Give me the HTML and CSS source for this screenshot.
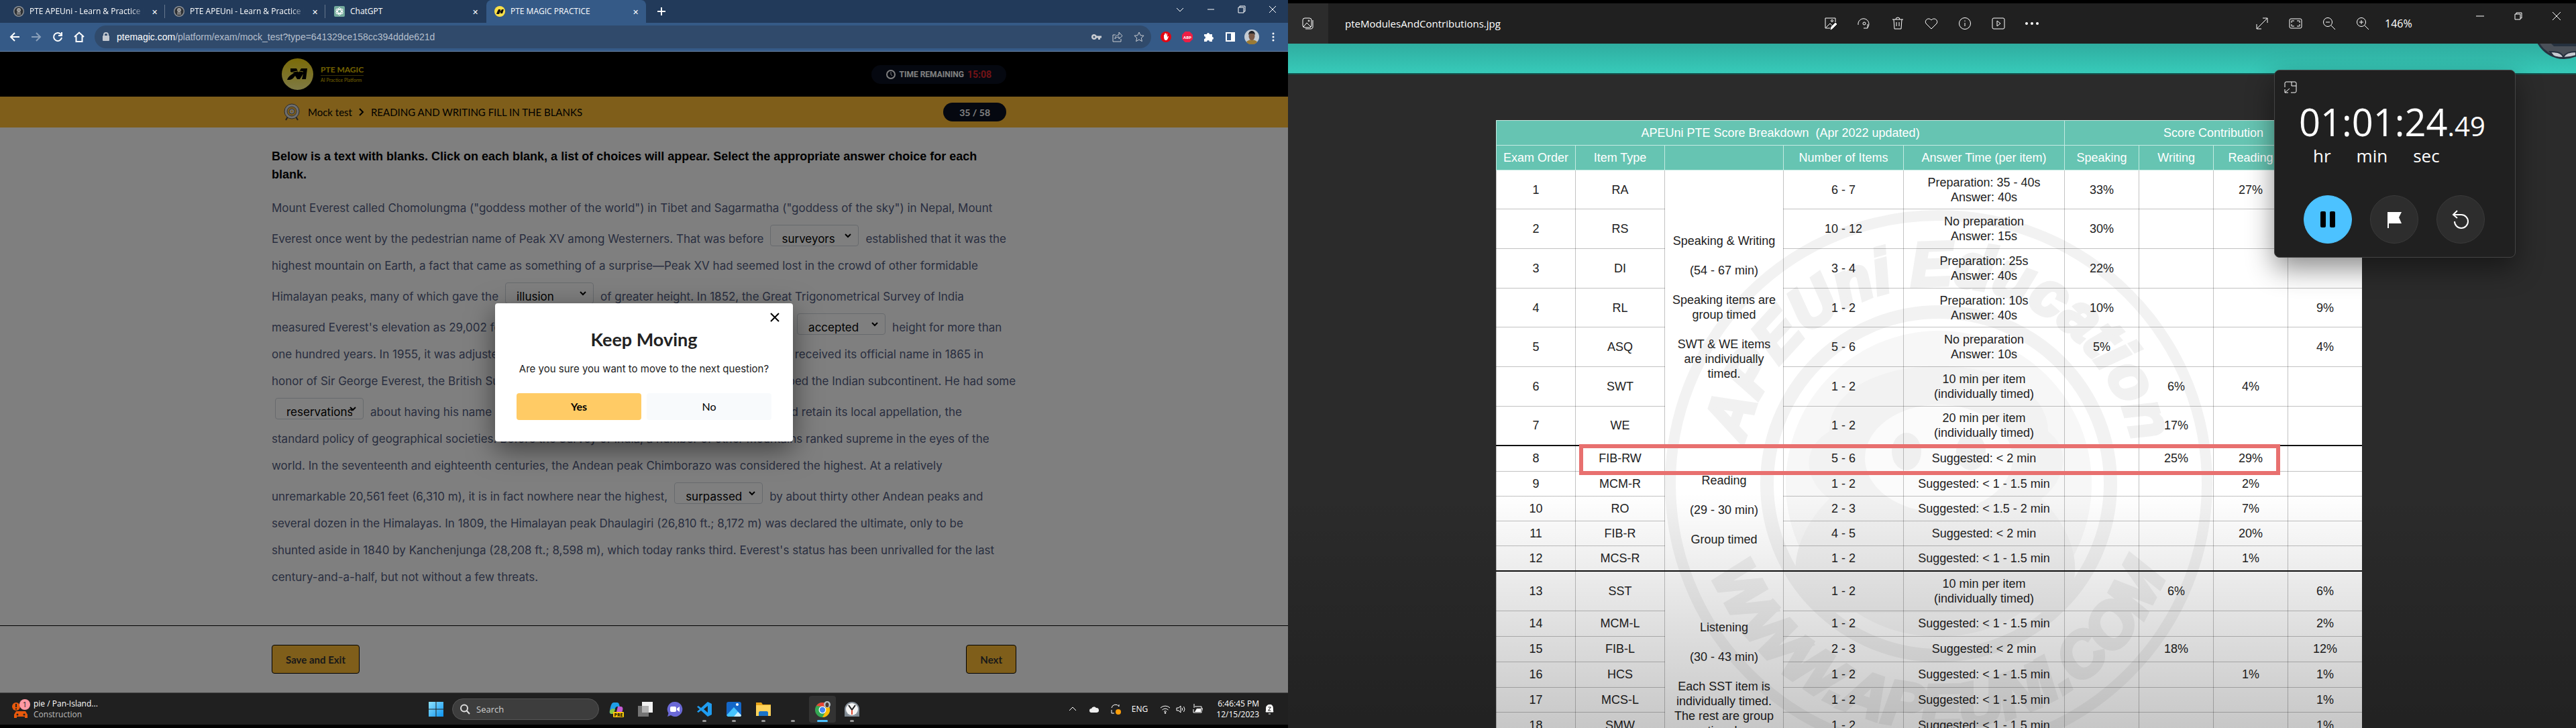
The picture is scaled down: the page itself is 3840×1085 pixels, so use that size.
FILE: index.html
```html
<!DOCTYPE html>
<html lang="en">
<head>
<meta charset="utf-8">
<title>PTE MAGIC PRACTICE</title>
<link rel="stylesheet" href="styles.css">
</head>
<body>
<div class="desktop">
  <div class="screen">
    <div class="browser">
      <div class="tabs">
        <div class="tab">
          <svg class="fav" viewBox="0 0 16 16"><circle cx="8" cy="8" r="8" fill="#8b8f93"/><circle cx="8" cy="8" r="6.5" fill="#2c2f33"/><circle cx="8" cy="6" r="3" fill="#a9a9a9"/><path d="M5 9h6v4H5z" fill="#777"/><path d="M6.500 6h1M8.500 6h1" stroke="#222"/></svg>
          <span class="tab-title">PTE APEUni - Learn &amp; Practice PTE</span><button class="x" aria-label="Close tab">✕</button>
        </div>
        <div class="tab">
          <svg class="fav" viewBox="0 0 16 16"><circle cx="8" cy="8" r="8" fill="#8b8f93"/><circle cx="8" cy="8" r="6.500" fill="#2c2f33"/><circle cx="8" cy="6" r="3" fill="#a9a9a9"/><path d="M5 9h6v4H5z" fill="#777"/><path d="M6.500 6h1M8.500 6h1" stroke="#222"/></svg>
          <span class="tab-title">PTE APEUni - Learn &amp; Practice PTE</span><button class="x" aria-label="Close tab">✕</button>
        </div>
        <div class="tab">
          <svg class="fav" viewBox="0 0 16 16"><rect width="16" height="16" rx="2" fill="#74aa9c"/><g fill="none" stroke="#fff"><ellipse cx="8" cy="8" rx="2.600" ry="5.500"/><ellipse cx="8" cy="8" rx="2.600" ry="5.500" transform="rotate(60 8 8)"/><ellipse cx="8" cy="8" rx="2.600" ry="5.500" transform="rotate(120 8 8)"/></g></svg>
          <span class="tab-title">ChatGPT</span><button class="x" aria-label="Close tab">✕</button>
        </div>
        <div class="tab active">
          <svg class="fav" viewBox="0 0 16 16"><circle cx="8" cy="8" r="8" fill="#fde047"/><path d="M3 12l1-3 2-4h3l0 3 2-3h3l-2 6h-3l0-3-2 4H5z" fill="#111"/></svg>
          <span class="tab-title">PTE MAGIC PRACTICE</span><button class="x" aria-label="Close tab">✕</button>
        </div>
        <button class="plus" aria-label="New tab"><svg width="14" height="14" viewBox="0 0 14 14"><path d="M7 1v12M1 7h12" stroke="#fff" stroke-width="2"/></svg></button>
        <div class="wincontrols">
          <svg viewBox="0 0 12 12"><path d="M1 4l5 5 5-5"/></svg>
          <svg viewBox="0 0 12 12"><path d="M1 6h10"/></svg>
          <svg viewBox="0 0 12 12"><path d="M1 3h8v8H1zM3 3V1h8v8H9"/></svg>
          <svg viewBox="0 0 12 12"><path d="M1 1l10 10M11 1L1 11"/></svg>
        </div>
      </div>
      <div class="toolbar">
        <div class="nav">
          <svg viewBox="0 0 16 16"><path d="M15 8H2M8 2L2 8l6 6"/></svg>
          <svg viewBox="0 0 16 16" class="dim"><path d="M1 8h13M8 2l6 6-6 6"/></svg>
          <svg viewBox="0 0 16 16"><path d="M13 4.500A6 6 0 1 0 14 9M14 1v5H9"/></svg>
          <svg viewBox="0 0 16 16"><path d="M1 8l7-6.500L15 8M3.500 7v8h9V7"/></svg>
        </div>
        <div class="omnibox">
          <svg width="12" height="14" viewBox="0 0 12 14"><rect x="1" y="5" width="10" height="8" rx="1" fill="#c3c8cf"/><path d="M3 6V4a3 3 0 0 1 6 0v2" fill="none" stroke="#c3c8cf" stroke-width="2"/></svg>
          <div class="url"><b>ptemagic.com</b>/platform/exam/mock_test?type=641329ce158cc394ddde621d</div>
          <div class="omni-icons">
            <svg viewBox="0 0 16 16"><path d="M1 8a4 4 0 0 1 7.700-1.500H16v3h-2V12h-3V9.500H8.700A4 4 0 0 1 1 8z" fill="#c9ccd1"/><circle cx="5" cy="8" r="1.500" fill="#304a6b"/></svg>
            <svg viewBox="0 0 16 16" class="line-icon"><path d="M5 5H1v10h12v-4M4 11c0-4 3-6 6-6V1l5 5.500L10 11V8c-3 0-5 1-6 3z"/></svg>
            <svg viewBox="0 0 16 16" class="line-icon"><path d="M8 1l2.100 4.700 5 .5-3.800 3.400 1.100 5L8 12l-4.400 2.600 1.100-5L.9 6.200l5-.5z"/></svg>
          </div>
        </div>
        <div class="exts">
          <svg viewBox="0 0 16 16"><circle cx="8" cy="8" r="8" fill="#e30613"/><path d="M5 8V5h1V3h1v4V2.500h1V7l1-4h1v6l1-2h1c-1 4-2 6-4 6S5 11 5 8z" fill="#fff"/></svg>
          <svg viewBox="0 0 16 16"><path d="M4.700 0h6.600L16 4.700v6.600L11.300 16H4.700L0 11.300V4.700z" fill="#ed1e45"/><text x="8" y="10.500" text-anchor="middle" class="abp">ABP</text></svg>
          <svg viewBox="0 0 16 16"><path d="M1 4h4a2 2 0 1 1 4 0h4v4a2 2 0 1 1 0 4v3H9a2 2 0 1 0-4 0H1v-4a2 2 0 1 0 0-4z" fill="#fff"/></svg>
          <svg viewBox="0 0 16 16"><path d="M2 2h12v12H2z" fill="none" stroke="#fff" stroke-width="2"/><path d="M9 2h5v12H9z" fill="#fff"/></svg>
          <svg class="avatar" viewBox="0 0 22 22"><circle cx="11" cy="11" r="11" fill="#c4ccd4"/><path d="M3 19c2-5 14-5 16 0a11 11 0 0 1-16 0z" fill="#9a7a35"/><ellipse cx="11" cy="10" rx="4.500" ry="6" fill="#7a5947"/><path d="M6 8c0-8 10-8 10 0l-2-2H8z" fill="#23242a"/></svg>
          <svg viewBox="0 0 16 16"><g fill="#fff"><circle cx="8" cy="3" r="1.500"/><circle cx="8" cy="8" r="1.500"/><circle cx="8" cy="13" r="1.500"/></g></svg>
        </div>
      </div>
      <main class="page">
        <header class="brandbar"><div class="wrap">
          <div class="brand">
            <svg width="47" height="47" viewBox="0 0 47 47"><defs><linearGradient id="lg" x2="0" y2="1"><stop offset="0" stop-color="#f5d510"/><stop offset="1" stop-color="#fdf58a"/></linearGradient></defs><circle cx="23.500" cy="23.500" r="23.500" fill="url(#lg)"/><path d="M13 15h9l3 6 4-6h9l-2 16h-6l2-8-5 8h-4l-3-5c-2 2-3 5-8 6H8c2-6 7-8 10-10l-5-2z" fill="#000"/><path d="M10 24c8-5 14-6 22-4" stroke="#f7e340" fill="none"/></svg>
            <div class="brand-text"><span class="bt1">PTE MAGIC</span><span class="bt2">AI Practice Platform</span></div>
          </div>
          <div class="pill timer"><svg width="14" height="14" viewBox="0 0 14 14"><circle cx="7" cy="7" r="6" fill="none" stroke="#fff" stroke-width="2"/><path d="M7 3v4l2 2" fill="none" stroke="#fff"/></svg><span>TIME REMAINING</span><span class="red">15:08</span></div>
        </div></header>
        <div class="crumbbar"><div class="wrap">
          <nav class="crumbs"><svg width="24" height="26" viewBox="0 0 24 26"><path d="M6 20l-3 5M18 20l3 5" stroke="#444" stroke-width="2"/><circle cx="12" cy="12" r="11" fill="#ddd" stroke="#555"/><circle cx="12" cy="12" r="7" fill="#ffbc34" stroke="#666"/><circle cx="12" cy="12" r="4" fill="#ddd" stroke="#666"/><circle cx="12" cy="12" r="1.500" fill="#ffbc34"/></svg><a href="#">Mock test</a><svg width="8" height="12" viewBox="0 0 8 12"><path d="M1 1l5 5-5 5" fill="none" stroke="#000" stroke-width="2"/></svg><span>READING AND WRITING FILL IN THE BLANKS</span></nav>
          <div class="pill count">35 / 58</div>
        </div></div>
        <section class="question">
          <h1>Below is a text with blanks. Click on each blank, a list of choices will appear. Select the appropriate answer choice for each<br>blank.</h1>
          <div class="passage">
            <div class="line">Mount Everest called Chomolungma ("goddess mother of the world") in Tibet and Sagarmatha ("goddess of the sky") in Nepal, Mount</div>
            <div class="line has-blank"><span>Everest once went by the pedestrian name of Peak XV among Westerners. That was before</span><select aria-label="Blank 1"><option>surveyors</option></select><span>established that it was the</span></div>
            <div class="line">highest mountain on Earth, a fact that came as something of a surprise—Peak XV had seemed lost in the crowd of other formidable</div>
            <div class="line has-blank"><span>Himalayan peaks, many of which gave the</span><select aria-label="Blank 2"><option>illusion</option></select><span>of greater height. In 1852, the Great Trigonometrical Survey of India</span></div>
            <div class="line has-blank"><span>measured Everest's elevation as 29,002 feet above sea level; this number remained the officially</span><select aria-label="Blank 3"><option>accepted</option></select><span>height for more than</span></div>
            <div class="line">one hundred years. In 1955, it was adjusted to 29,028 feet (8,848 meters). The Tibetan mountain received its official name in 1865 in</div>
            <div class="line">honor of Sir George Everest, the British Surveyor General of India from 1830 until 1843 who mapped the Indian subcontinent. He had some</div>
            <div class="line has-blank"><select aria-label="Blank 4"><option>reservations</option></select><span>about having his name bestowed on the peak, arguing that the mountain should retain its local appellation, the</span></div>
            <div class="line">standard policy of geographical societies. Before the Survey of India, a number of other mountains ranked supreme in the eyes of the</div>
            <div class="line">world. In the seventeenth and eighteenth centuries, the Andean peak Chimborazo was considered the highest. At a relatively</div>
            <div class="line has-blank"><span>unremarkable 20,561 feet (6,310 m), it is in fact nowhere near the highest,</span><select aria-label="Blank 5"><option>surpassed</option></select><span>by about thirty other Andean peaks and</span></div>
            <div class="line">several dozen in the Himalayas. In 1809, the Himalayan peak Dhaulagiri (26,810 ft.; 8,172 m) was declared the ultimate, only to be</div>
            <div class="line">shunted aside in 1840 by Kanchenjunga (28,208 ft.; 8,598 m), which today ranks third. Everest's status has been unrivalled for the last</div>
            <div class="line">century-and-a-half, but not without a few threats.</div>
          </div>
        </section>
        <footer class="actions"><button class="act">Save and Exit</button><button class="act">Next</button></footer>
        <div class="backdrop">
          <div class="dialog" role="dialog" aria-labelledby="dlg">
            <button class="dlg-close" aria-label="Close"><svg width="16" height="16" viewBox="0 0 16 16"><path d="M2 2l12 12M14 2L2 14" stroke="#000" stroke-width="2"/></svg></button>
            <h2 id="dlg">Keep Moving</h2>
            <p>Are you sure you want to move to the next question?</p>
            <div class="dlg-btns"><button class="yes">Yes</button><button class="no">No</button></div>
          </div>
        </div>
      </main>
    </div>
    <div class="taskbar">
      <div class="weather">
        <svg width="28" height="30" viewBox="0 0 28 30"><ellipse cx="6" cy="11" rx="6" ry="6" fill="#e8590c"/><path d="M6 7v5M6 13.500v2" stroke="#222" stroke-width="2"/><path d="M6 18h14l3 5v5h-4v-2H7v2H3v-5z" fill="#e8590c"/><circle cx="8" cy="23" r="1.500" fill="#222"/><circle cx="18" cy="23" r="1.500" fill="#222"/><circle cx="19" cy="8" r="8" fill="#ff99a4"/><text x="19" y="12" text-anchor="middle" class="badge">1</text></svg>
        <div><div class="w1">pie / Pan-Island...</div><div class="w2">Construction</div></div>
      </div>
      <div class="apps">
        <svg class="app" viewBox="0 0 24 24"><defs><linearGradient id="win" x2="1" y2="1"><stop offset="0" stop-color="#8fe3ff"/><stop offset="1" stop-color="#0c93f0"/></linearGradient></defs><path d="M1 1h10.500v10.500H1zM12.500 1H23v10.500H12.500zM1 12.500h10.500V23H1zM12.500 12.500H23V23H12.500z" fill="url(#win)"/></svg>
        <label class="search"><svg width="16" height="16" viewBox="0 0 16 16"><circle cx="7" cy="6.500" r="5" fill="none" stroke="#ddd" stroke-width="2"/><path d="M10.500 10l4.500 5" stroke="#ddd" stroke-width="2"/></svg><input type="text" placeholder="Search" aria-label="Search"></label>
        <div class="slot"><svg class="app" viewBox="0 0 24 24"><path d="M3 15C4 6 6 2 9 2h5c3 0 3 4 4 6l-4 0c-2 0-3 2-4 6s-2 5-4 5-4-1-3-4z" fill="#1f9fe8"/><path d="M3 14l4-3 4 1-2 6c-3 2-7 1-6-4z" fill="#8cc63f"/><path d="M15 8h4c3 0 4 2 3 6s-3 6-6 6h-4z" fill="#c65cd6"/><rect x="8" y="16" width="16" height="8" rx="1" fill="#ffc50c"/><text x="16" y="23" text-anchor="middle" class="pre">PRE</text></svg></div>
        <div class="slot"><svg class="app" viewBox="0 0 24 24"><rect x="7" y="1" width="16" height="16" fill="#f2f2f2"/><rect x="1" y="7" width="16" height="16" fill="#999" opacity=".7"/></svg></div>
        <div class="slot"><svg class="app" viewBox="0 0 24 24"><path d="M12 1a11 11 0 1 1-6 20l-5 2 1.500-5A11 11 0 0 1 12 1z" fill="#6b69d6"/><rect x="5" y="8" width="9" height="8" rx="2" fill="#fff"/><path d="M15 11l4-3v8l-4-3z" fill="#fff"/></svg></div>
        <div class="slot dot"><svg class="app" viewBox="0 0 24 24"><path d="M17 1l6 3v16l-6 3-10-9-4 3-2-1.500L5 12 1 8.500 3 7l4 3zM17 7l-6 5 6 5z" fill="#1f9cf0" fill-rule="evenodd"/></svg></div>
        <div class="slot dot"><svg class="app" viewBox="0 0 24 24"><rect x="1" y="1" width="22" height="22" rx="3" fill="#1467c8"/><path d="M1 21L12 9l11 12c0 1-1 2-2 2H3z" fill="#46c4ff"/><path d="M12 23l6-7 5 5c0 1-1 2-2 2z" fill="#cdefff"/><circle cx="17" cy="5" r="2" fill="#fff"/></svg></div>
        <div class="slot dot"><svg class="app" viewBox="0 0 24 24"><path d="M1 2h8l2 3h12v17H1z" fill="#e8a317"/><path d="M1 6h22v16H1z" fill="#ffd35a"/><path d="M5 22v-5c0-1 1-2 2-2h10c1 0 2 1 2 2v5z" fill="#1a73c7"/></svg></div>
        <div class="slot dot"></div>
        <div class="slot current"><svg class="app" viewBox="0 0 24 24"><circle cx="12" cy="13" r="11" fill="#34a853"/><path d="M12 2a11 11 0 0 1 10 6H12L3 7a11 11 0 0 1 9-5z" fill="#ea4335"/><path d="M22 8a11 11 0 0 1-10 16l5-9V8z" fill="#fbbc05"/><circle cx="12" cy="13" r="5.500" fill="#fff"/><circle cx="12" cy="13" r="4.200" fill="#4285f4"/><circle cx="19" cy="5" r="5" fill="#b8c0c8"/><ellipse cx="19" cy="5.500" rx="2.500" ry="3.500" fill="#4b3a33"/></svg></div>
        <div class="slot dot"><svg class="app" viewBox="0 0 24 24"><path d="M1 12h22v11H1z" fill="#7d8790"/><circle cx="12" cy="12" r="11" fill="#88929b"/><circle cx="12" cy="12" r="9" fill="#f4f4f4"/><path d="M12 12v8" stroke="#e0482f" stroke-width="2"/><path d="M12 13L7 6M12 13l5-7" stroke="#222" stroke-width="2"/></svg></div>
      </div>
      <div class="tray">
        <svg viewBox="0 0 16 16"><path d="M3 10l5-5 5 5"/></svg>
        <svg viewBox="0 0 16 16"><path d="M4 13a3 3 0 0 1 0-6 4 4 0 0 1 7-1 3.500 3.500 0 0 1 1 7z" fill="#eee" stroke="none"/></svg>
        <svg viewBox="0 0 16 16"><path d="M2 6a6 6 0 0 1 11-2V1M2 9v5h4"/><circle cx="12" cy="12" r="4" fill="#ff9f0a" stroke="none"/></svg>
        <span>ENG</span>
        <div class="trio">
        <svg viewBox="0 0 16 16"><path d="M1 6a10 10 0 0 1 14 0M3.500 9a6.500 6.500 0 0 1 9 0M6 11.500a3 3 0 0 1 4 0"/><circle cx="8" cy="13.500" r="1.200" fill="#fff" stroke="none"/></svg>
        <svg viewBox="0 0 16 16"><path d="M1 6h3l3-3v10l-3-3H1zM9 6q1.500 2 0 4M11.500 4q3 4 0 8"/></svg>
        <svg viewBox="0 0 16 16"><path d="M4 4h10v9H2V8M14 7h2v3"/><path d="M7 7h6v5H4z" fill="#fff" stroke="none"/><path d="M3 0v6"/></svg>
        </div>
        <div class="clock">6:46:45 PM<br>12/15/2023</div>
        <svg viewBox="0 0 16 16"><path d="M3 12c1-2 0-5 1-8s8-4 9 0 0 6 1 8z" fill="#fff"/><path d="M6.500 5h4l-4 5h4" stroke="#222"/><path d="M7 15h3"/></svg>
      </div>
    </div>
  </div>

  <div class="photos">
    <div class="ph-bar">
      <div class="ph-icon"><svg viewBox="0 0 20 20"><rect x="2" y="2" width="13" height="14" rx="3"/><path d="M3 15l5-6 6 6M17 5v11a3 3 0 0 1-3 2H6"/><circle cx="11" cy="6" r="1"/></svg></div>
      <span class="ph-name">pteModulesAndContributions.jpg</span>
      <div class="ph-tools">
        <svg viewBox="0 0 20 20"><path d="M17 8V2H2v15h7M3 16l6-6 3 3M11 17l7-8"/><circle cx="12" cy="6" r="1.500"/><path d="M10 19l1-4 6-6 2 2-6 6z" fill="#fff"/></svg>
        <svg viewBox="0 0 20 20"><path d="M1 12A8 8 0 1 1 15 16M15 11v6h-6"/><circle cx="10" cy="10" r="2"/></svg>
        <svg viewBox="0 0 20 20"><path d="M2 4h16M7 4a3 3 0 0 1 6 0M4 4l1 14h10l1-14M8 8v6M12 8v6"/></svg>
        <svg viewBox="0 0 20 20"><path d="M10 18L2 10C-1 5 6 0 10 5c4-5 11 0 8 5z"/></svg>
        <svg viewBox="0 0 20 20"><circle cx="10" cy="10" r="8.500"/><path d="M10 9v5M10 5.500v1.500"/></svg>
        <svg viewBox="0 0 20 20"><rect x="1" y="2" width="18" height="16" rx="2"/><path d="M8 6v8l5-4z"/></svg>
        <svg viewBox="0 0 20 20"><g fill="#fff" stroke="none"><circle cx="2" cy="10" r="2"/><circle cx="10" cy="10" r="2"/><circle cx="18" cy="10" r="2"/></g></svg>
      </div>
      <div class="ph-zoom">
        <svg viewBox="0 0 20 20"><path d="M2 18L18 2M11 2h7v7M2 11v7h7"/></svg>
        <svg viewBox="0 0 20 20"><rect x="1" y="3" width="18" height="14" rx="2"/><path d="M4 9V6h4M12 6h4v3M16 11v3h-4M8 14H4v-3"/></svg>
        <svg viewBox="0 0 20 20"><circle cx="8" cy="8" r="6.500"/><path d="M13 13l6 6M5 8h6"/></svg>
        <svg viewBox="0 0 20 20"><circle cx="8" cy="8" r="6.500"/><path d="M13 13l6 6M5 8h6M8 5v6"/></svg>
        <span>146%</span>
      </div>
      <div class="ph-win">
        <svg viewBox="0 0 12 12"><path d="M0 6h12"/></svg>
        <svg viewBox="0 0 12 12"><path d="M1 3h8v8H1zM3 3V1h8v8H9"/></svg>
        <svg viewBox="0 0 12 12"><path d="M0 0l12 12M12 0L0 12"/></svg>
      </div>
    </div>
    <div class="canvas">
      <div class="teal"><svg width="57" height="24" viewBox="0 0 57 24"><circle cx="39" cy="-22" r="45" fill="#26313f"/><circle cx="39" cy="-22" r="42" fill="#4a5058"/><path d="M18 12c12 0 18 2 20 8 3-6 9-8 19-8v6c-12 4-28 4-34 0z" fill="#c9ccd2" stroke="#26313f" stroke-width="2"/><path d="M20 0h37v4H24z" fill="#26313f"/></svg></div>
      <div class="sheet">
        <svg class="mark" width="816" height="816" viewBox="0 0 816 816">
          <defs><path id="up" d="M112 408a296 296 0 0 1 592 0"/><path id="dn" d="M44 408a364 364 0 0 0 728 0"/></defs>
          <circle cx="408" cy="408" r="400" fill="none" stroke="#f2f2f2" stroke-width="16"/>
          <circle cx="408" cy="408" r="256" fill="none" stroke="#f2f2f2" stroke-width="20"/>
          <circle cx="408" cy="408" r="228" fill="#f7f7f7"/>
          <path d="M245 330c0-130 326-130 326 0 40 30 20 80-10 100 60 60 70 140 10 170H235c-60-30-50-110 10-170-30-20-50-70 0-100z" fill="#f2f2f2"/>
          <ellipse cx="408" cy="370" rx="110" ry="80" fill="#fbfbfb"/><ellipse cx="360" cy="360" rx="22" ry="28" fill="#efefef"/><ellipse cx="456" cy="360" rx="22" ry="28" fill="#efefef"/>
          <text class="mark-text"><textPath href="#up" startOffset="50%" text-anchor="middle">APEUni Education</textPath></text>
          <text class="mark-text"><textPath href="#dn" startOffset="50%" text-anchor="middle">WWW.APEUNI.COM</textPath></text>
        </svg>
        <table>
          <colgroup><col class="c1"><col class="c2"><col class="c3"><col class="c4"><col class="c5"><col class="c6"><col class="c6"><col class="c6"><col class="c6"></colgroup>
          <thead>
            <tr><th colspan="5">APEUni PTE Score Breakdown&nbsp; (Apr 2022 updated)</th><th colspan="4">Score Contribution</th></tr>
            <tr><th>Exam Order</th><th>Item Type</th><th></th><th>Number of Items</th><th>Answer Time (per item)</th><th>Speaking</th><th>Writing</th><th>Reading</th><th></th></tr>
          </thead>
          <tbody>
            <tr class="tall"><td>1</td><td>RA</td><td rowspan="7">Speaking &amp; Writing<br><br>(54 - 67 min)<br><br>Speaking items are group timed<br><br>SWT &amp; WE items are individually timed.</td><td>6 - 7</td><td>Preparation: 35 - 40s<br>Answer: 40s</td><td>33%</td><td></td><td>27%</td><td></td></tr>
            <tr class="tall"><td>2</td><td>RS</td><td>10 - 12</td><td>No preparation<br>Answer: 15s</td><td>30%</td><td></td><td></td><td></td></tr>
            <tr class="tall"><td>3</td><td>DI</td><td>3 - 4</td><td>Preparation: 25s<br>Answer: 40s</td><td>22%</td><td></td><td></td><td></td></tr>
            <tr class="tall"><td>4</td><td>RL</td><td>1 - 2</td><td>Preparation: 10s<br>Answer: 40s</td><td>10%</td><td></td><td></td><td>9%</td></tr>
            <tr class="tall"><td>5</td><td>ASQ</td><td>5 - 6</td><td>No preparation<br>Answer: 10s</td><td>5%</td><td></td><td></td><td>4%</td></tr>
            <tr class="tall"><td>6</td><td>SWT</td><td>1 - 2</td><td>10 min per item<br>(individually timed)</td><td></td><td>6%</td><td>4%</td><td></td></tr>
            <tr class="tall"><td>7</td><td>WE</td><td>1 - 2</td><td>20 min per item<br>(individually timed)</td><td></td><td>17%</td><td></td><td></td></tr>
          </tbody>
          <tbody>
            <tr class="marked"><td>8</td><td>FIB-RW<span class="highlight"></span></td><td rowspan="5" class="reading">Reading<br><br>(29 - 30 min)<br><br>Group timed</td><td>5 - 6</td><td>Suggested: &lt; 2 min</td><td></td><td>25%</td><td>29%</td><td></td></tr>
            <tr><td>9</td><td>MCM-R</td><td>1 - 2</td><td>Suggested: &lt; 1 - 1.5 min</td><td></td><td></td><td>2%</td><td></td></tr>
            <tr><td>10</td><td>RO</td><td>2 - 3</td><td>Suggested: &lt; 1.5 - 2 min</td><td></td><td></td><td>7%</td><td></td></tr>
            <tr><td>11</td><td>FIB-R</td><td>4 - 5</td><td>Suggested: &lt; 2 min</td><td></td><td></td><td>20%</td><td></td></tr>
            <tr><td>12</td><td>MCS-R</td><td>1 - 2</td><td>Suggested: &lt; 1 - 1.5 min</td><td></td><td></td><td>1%</td><td></td></tr>
          </tbody>
          <tbody>
            <tr class="tall"><td>13</td><td>SST</td><td rowspan="6" class="listen">Listening<br><br>(30 - 43 min)<br><br>Each SST item is individually timed. The rest are group timed.</td><td>1 - 2</td><td>10 min per item<br>(individually timed)</td><td></td><td>6%</td><td></td><td>6%</td></tr>
            <tr><td>14</td><td>MCM-L</td><td>1 - 2</td><td>Suggested: &lt; 1 - 1.5 min</td><td></td><td></td><td></td><td>2%</td></tr>
            <tr><td>15</td><td>FIB-L</td><td>2 - 3</td><td>Suggested: &lt; 2 min</td><td></td><td>18%</td><td></td><td>12%</td></tr>
            <tr><td>16</td><td>HCS</td><td>1 - 2</td><td>Suggested: &lt; 1 - 1.5 min</td><td></td><td></td><td>1%</td><td>1%</td></tr>
            <tr><td>17</td><td>MCS-L</td><td>1 - 2</td><td>Suggested: &lt; 1 - 1.5 min</td><td></td><td></td><td></td><td>1%</td></tr>
            <tr><td>18</td><td>SMW</td><td>1 - 2</td><td>Suggested: &lt; 1 - 1.5 min</td><td></td><td></td><td></td><td>1%</td></tr>
          </tbody>
        </table>
      </div>
      <div class="shade"></div>
    </div>
    <div class="stopwatch">
      <svg class="sw-pin" width="20" height="20" viewBox="0 0 20 20"><path d="M1 10V4a2 2 0 0 1 2-2h13a2 2 0 0 1 2 2v12a2 2 0 0 1-2 2h-6M11 2v6h7M1 18l7-6M1 13v5h5"/></svg>
      <div class="sw-time">01:01:24<span>.49</span></div>
      <div class="sw-units"><span>hr</span><span>min</span><span>sec</span></div>
      <div class="sw-btns">
        <button class="pause" aria-label="Pause"><svg width="28" height="28" viewBox="0 0 28 28"><rect x="3" y="2" width="8" height="24" rx="2"/><rect x="17" y="2" width="8" height="24" rx="2"/></svg></button>
        <button aria-label="Lap"><svg width="28" height="28" viewBox="0 0 28 28"><path d="M4 3h21l-4 8 4 9H6v7H4z" fill="#fff"/></svg></button>
        <button aria-label="Reset"><svg width="28" height="28" viewBox="0 0 28 28"><path d="M9 1L3 7l6 5M3 7h12a10 10 0 1 1-10 10" fill="none" stroke="#fff" stroke-width="2"/></svg></button>
      </div>
    </div>
  </div>
</div>
</body>
</html>
```
FILE: styles.css
```css
* { box-sizing: border-box; }
body { margin: 0; background: #000; font-family: "Open Sans", "Noto Sans", sans-serif; }
button { font: inherit; border: 0; background: none; padding: 0; cursor: pointer; }
.desktop { display: grid; grid-template-columns: 1fr 1fr; height: 100vh; overflow: hidden; }

/* browser window */
.screen { display: flex; flex-direction: column; min-width: 0; padding-bottom: 5px; height: 100vh; }
.browser { flex: 1; display: flex; flex-direction: column; min-height: 0; }
.tabs { display: flex; height: 34px; background: #223a5a; padding-left: 8px; color: #fff; font-size: 12px; }
.tab { display: flex; align-items: center; width: 239px; padding: 0 8px 0 12px; border-right: 1px solid #223a5a; }
.tab:nth-child(-n+2) { background: linear-gradient(#66778d, #66778d) right center / 1px 20px no-repeat; }
.tab.active { background: #355a87; border-radius: 8px 8px 0 0; }
.fav { width: 16px; height: 16px; margin-right: 8px; flex: none; }
.tab-title { flex: 1; overflow: hidden; white-space: nowrap; line-height: 34px; }
.tab:nth-child(-n+2) .tab-title { -webkit-mask-image: linear-gradient(90deg, #000 150px, transparent 172px); }
.x { width: 16px; margin-left: 8px; color: #fff; font-size: 11px; }
.plus { padding: 0 15px; display: flex; align-items: center; }
.wincontrols { margin-left: auto; display: flex; gap: 34px; padding: 8px 17px 0 0; }
.wincontrols svg, .ph-win svg { width: 12px; height: 12px; fill: none; stroke: #fff; }
.toolbar { display: flex; align-items: center; height: 43px; background: #355a87; border-bottom: 1px solid #6d8bb0; padding: 0 14px; }
.nav { display: flex; gap: 16px; width: 127px; }
.nav svg { width: 16px; height: 16px; fill: none; stroke: #fff; stroke-width: 2; }
.nav .dim { stroke: #8ba1bb; }
.omnibox { flex: 1; height: 34px; border-radius: 17px; background: #304a6b; display: flex; align-items: center; gap: 10px; padding: 0 10px 0 11px; }
.url { flex: 1; font: 14px "Liberation Sans", sans-serif; color: #b5bfcc; }
.url b { font-weight: 400; color: #fff; }
.omni-icons, .exts { display: flex; gap: 16px; align-items: center; }
.omni-icons svg, .exts svg { width: 16px; height: 16px; }
.line-icon { fill: none; stroke: #c9ccd1; }
.exts { padding-left: 14px; }
.exts .avatar { width: 22px; height: 22px; margin: 0 -3px; }
.abp { font: bold 6px "Open Sans", sans-serif; fill: #fff; }

/* exam page */
.page { flex: 1; min-height: 0; position: relative; background: #fff; overflow: hidden; }
.wrap { width: 1080px; margin: 0 auto; height: 100%; display: flex; align-items: center; justify-content: space-between; }
.brandbar { height: 67px; background: #000; font-family: Lato, sans-serif; }
.brand { display: flex; gap: 11px; align-items: center; }
.brand-text { display: flex; flex-direction: column; color: #e0c000; }
.bt1 { font-size: 12px; font-weight: 700; line-height: 16px; border-bottom: 1px solid #6d5e10; }
.bt2 { font-size: 7px; line-height: 12px; }
.pill { background: #0a1020; color: #fff; border-radius: 14px; height: 28px; display: flex; align-items: center; font-weight: 700; }
.timer { padding: 0 22px; gap: 5px; font: 700 12px Roboto, sans-serif; }
.timer .red { color: #e0262c; font-size: 14px; }
.crumbbar { height: 46px; background: #ffbc34; font: 15px Lato, sans-serif; }
.crumbs { display: flex; align-items: center; padding-left: 3px; }
.crumbs a { color: #000; text-decoration: none; margin: 0 10px 0 12px; }
.crumbs span { margin-left: 10px; }
.count { padding: 0 24px; font-size: 14px; }
.question { width: 1110px; margin: 0 auto; padding: 30px 0 52px; }
h1 { margin: 0 0 16px; font: 700 18px/27px "Liberation Sans", sans-serif; white-space: nowrap; }
.passage { font: 17px/40px Inter, sans-serif; color: #525c80; white-space: nowrap; }
.line { height: 40px; }
.has-blank { height: 46px; display: flex; align-items: flex-end; }
.has-blank select {
  appearance: none; width: 132px; height: 32px; margin: 0 10px 9px; padding: 10px 16px 0; line-height: 20px;
  border: 1px solid #ced4da; border-radius: 4px; font: 17px Inter, sans-serif; color: #000;
  background: url("data:image/svg+xml,%3Csvg xmlns='http://www.w3.org/2000/svg' width='10' height='8'%3E%3Cpath d='M1 2l4 4 4-4' fill='none' stroke='black' stroke-width='2'/%3E%3C/svg%3E") right 10px center no-repeat;
}
.has-blank select:first-child { margin-left: 5px; }
.actions { border-top: 1px solid #000; padding: 28px calc(50% - 555px); display: flex; justify-content: space-between; }
.act { height: 43px; padding: 0 20px; border: 1px solid #000; border-radius: 4px; background: #ffbc34; font: 700 15px Lato, sans-serif; color: #333; }
.backdrop { position: absolute; inset: 0; background: rgba(0, 0, 0, .5); display: grid; place-items: center; }
.dialog { position: relative; width: 444px; padding: 36px 32px 32px; background: #fff; border-radius: 4px; text-align: center; font-family: Lato, sans-serif; box-shadow: 0 12px 40px rgba(0, 0, 0, .5); }
.dlg-close { position: absolute; top: 13px; right: 19px; }
.dialog h2 { margin: 0; font-size: 27px; line-height: 36px; color: #222; }
.dialog p { margin: 14px 0 24px; font: 15px/24px Inter, sans-serif; color: #222; white-space: nowrap; }
.dlg-btns { display: grid; grid-template-columns: 1fr 1fr; gap: 8px; }
.dlg-btns button { height: 40px; border-radius: 4px; font-size: 16px; }
.yes { background: #ffcb65; font-weight: 700; }
.no { background: #f8fafc; }

/* taskbar */
.taskbar { height: 48px; background: #202020; border-top: 1px solid #4a4a4a; display: grid; grid-template-columns: 1fr auto 1fr; align-items: center; color: #fff; font-size: 12px; line-height: 16px; }
.weather { display: flex; align-items: center; gap: 4px; padding-left: 18px; }
.w2 { color: #bdbdbd; }
.badge { font: 11px "Open Sans", sans-serif; fill: #222; }
.apps { display: flex; align-items: center; padding-left: 10px; }
.app { width: 24px; height: 24px; display: block; }
.search { display: flex; align-items: center; gap: 9px; width: 219px; height: 32px; margin: 0 3px 0 12px; padding: 0 10px; border-radius: 16px; background: #3d3d3d; border: 1px solid #555; }
.search input { border: 0; background: none; min-width: 0; width: 150px; padding: 0; font: 13px "Open Sans", sans-serif; }
.search input::placeholder { color: #d0d0d0; }
.slot { position: relative; width: 40px; height: 40px; margin: 0 2px; display: grid; place-items: center; border-radius: 4px; }
.slot.current { background: #333; }
.slot.dot::after, .slot.current::after { content: ""; position: absolute; bottom: 1px; left: 17px; width: 6px; height: 3px; border-radius: 2px; background: #999; }
.slot.current::after { left: 12px; width: 16px; background: #4cc2ff; }
.pre { font: bold 7px "Open Sans", sans-serif; }
.tray { display: flex; align-items: center; justify-content: flex-end; gap: 16px; padding-right: 20px; }
.tray svg { width: 16px; height: 16px; fill: none; stroke: #fff; }
.trio { display: flex; gap: 8px; padding: 0 4px 0 2px; }
.clock { text-align: right; margin-right: -9px; }

/* photo viewer */
.photos { position: relative; height: 100vh; min-width: 0; padding-top: 5px; display: flex; flex-direction: column; overflow: hidden; }
.ph-bar { height: 60px; flex: none; background: #202020; display: flex; color: #fff; }
.ph-bar svg { fill: none; stroke: #fff; }
.ph-icon { width: 60px; background: #2c2c2c; display: grid; place-items: center; }
.ph-icon svg, .ph-tools svg, .ph-zoom svg { width: 20px; height: 20px; }
.ph-name { padding-left: 25px; line-height: 60px; font-size: 15px; width: 739px; }
.ph-tools { display: flex; align-items: center; gap: 30px; }
.ph-zoom { margin-left: auto; display: flex; align-items: center; gap: 30px; font-size: 16px; }
.ph-zoom span { margin-left: -7px; width: 44px; }
.ph-win { display: flex; gap: 45px; padding: 13px 23px 0 92px; }
.canvas { position: relative; flex: 1; min-height: 0; background: #2b2b2b; overflow: hidden; }
.teal { height: 46px; background: linear-gradient(#2fada0, #37cab9); border-bottom: 2px solid #14534e; display: flex; justify-content: flex-end; align-items: flex-start; margin-bottom: 68px; }
.sheet { position: relative; width: 1291px; margin-left: 310px; background: #fff; overflow: hidden; }
.mark { position: absolute; left: 252px; top: 134px; }
.mark-text { font: italic 700 92px "Liberation Sans Narrow", "Liberation Sans", sans-serif; fill: #f1f1f1; stroke: #f1f1f1; stroke-width: 6px; }
table { position: relative; width: 100%; table-layout: fixed; border-collapse: collapse; font: 18px/22px "Liberation Sans", Arial, sans-serif; color: #222; text-align: center; }
.c1 { width: 118px; }
.c2 { width: 133px; }
.c3 { width: 177px; }
.c4 { width: 179px; }
.c5 { width: 240px; }
.c6 { width: 111px; }
th, td { padding: 0 10px; border: 1px solid rgba(0, 0, 0, .24); white-space: nowrap; }
td[rowspan] { white-space: normal; }
th { height: 37px; padding: 0; font-weight: 400; color: #fff; background: #66c4b2; border-color: #c5ebe2; }
tbody tr { height: 37px; }
tbody tr.tall { height: 59px; }
tbody tr.tall:nth-child(3n+1) { height: 58px; }
tbody + tbody { border-top: 2px solid #111; }
tr.marked { height: 39px; }
tr.marked td:nth-child(2) { position: relative; }
td.reading { padding-top: 6px; }
td.listen { vertical-align: top; padding: 72px 6px 0; }
.highlight { position: absolute; left: 5px; top: -3px; width: 1045px; height: 46px; border: 6px solid #e8706f; }
.shade { position: absolute; left: 0; right: 0; bottom: 0; height: 350px; background: linear-gradient(rgba(0, 0, 0, 0), rgba(0, 0, 0, .22)); }

/* stopwatch widget floating above the viewer */
.stopwatch { position: absolute; top: 104px; right: 90px; width: 360px; height: 280px; background: #202020; border: 1px solid #444; border-radius: 8px; color: #fff; box-shadow: 0 16px 40px rgba(0, 0, 0, .45); }
.sw-pin { position: absolute; left: 14px; top: 15px; fill: none; stroke: #fff; }
.sw-time { padding: 40px 0 0 36px; font-size: 56px; line-height: 72px; white-space: nowrap; }
.sw-time span { font-size: 40px; }
.sw-units { display: flex; gap: 38px; padding-left: 57px; font-size: 26px; line-height: 32px; }
.sw-btns { display: flex; gap: 27px; padding: 43px 0 0 43px; }
.sw-time + .sw-units { margin-top: -8px; }
.sw-btns button { width: 72px; height: 72px; border-radius: 50%; background: #2d2d2d; border: 1px solid #3a3a3a; display: grid; place-items: center; }
.sw-btns .pause { background: #4cc2ff; border-color: #4cc2ff; }
```
